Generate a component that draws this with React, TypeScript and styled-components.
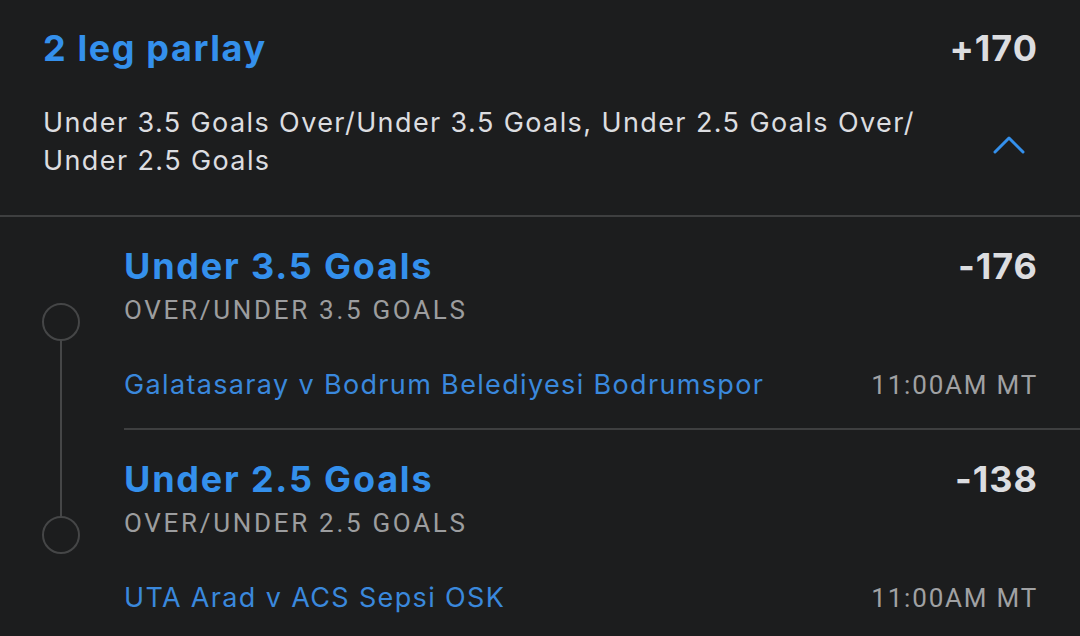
import styled, { createGlobalStyle } from "styled-components";

const GlobalStyle = createGlobalStyle`
    html, body {
        margin: 0;
        padding: 0;
        background: #1c1d1e;
    }
    body {
        font-family: Inter, "Open Sans", sans-serif;
        color: #dcdde0;
    }
`;

const BLUE = "#3490ec";
const LINK = "#3a88dc";
const RAIL = "#454647";

const Card = styled.div`
    width: 1080px;
    height: 636px;
    overflow: hidden;
    background: #1c1d1e;
`;

const Header = styled.div`
    padding: 24px 42px 0 43px;
    border-bottom: 2px solid #3e3f40;
    height: 191px;
    box-sizing: content-box;
`;

const TitleRow = styled.div`
    display: flex;
    justify-content: space-between;
    align-items: baseline;
`;

const ParlayTitle = styled.h1`
    margin: 0;
    font-size: 36px;
    font-weight: 700;
    color: ${BLUE};
    line-height: 48px;
    letter-spacing: 1.6px;
`;

const Odds = styled.span<{ size?: number }>`
    font-size: ${props => props.size ?? 36}px;
    font-weight: 700;
    color: #dcdde0;
    letter-spacing: 1px;
`;

const Summary = styled.div`
    display: flex;
    align-items: center;
    margin-top: 32px;
`;

const SummaryText = styled.p`
    flex: 1;
    margin: 0;
    font-size: 27px;
    line-height: 38px;
    letter-spacing: 1.4px;
    color: #dcdde0;
    padding-right: 20px;
`;

const Toggle = styled.button`
    background: none;
    border: 0;
    padding: 4px 13px 0 0;
    display: flex;
    cursor: pointer;
`;

const LegRow = styled.div`
    display: grid;
    grid-template-columns: 124px 1fr;
`;

const Rail = styled.div`
    display: flex;
    flex-direction: column;
    align-items: center;
    padding-right: 2px;
`;

const RailLine = styled.div<{ visible: boolean; grow?: boolean }>`
    width: 2px;
    background: ${props => (props.visible ? RAIL : "transparent")};
    height: ${props => (props.grow ? "auto" : "86px")};
    flex: ${props => (props.grow ? 1 : "none")};
`;

const Dot = styled.div`
    width: 34px;
    height: 34px;
    border: 2px solid ${RAIL};
    border-radius: 50%;
    flex: none;
`;

const LegBody = styled.div<{ divided: boolean }>`
    padding: 26px 42px 0 0;
    height: 185px;
    box-sizing: content-box;
    border-bottom: ${props => (props.divided ? `2px solid #3e3f40` : "none")};
`;

const LegTitle = styled.div`
    font-size: 36px;
    font-weight: 700;
    color: ${BLUE};
    line-height: 46px;
    letter-spacing: 1.8px;
`;

const Market = styled.div`
    font-family: Roboto, "Liberation Sans", sans-serif;
    font-size: 26px;
    letter-spacing: 2.7px;
    color: #9c9d9f;
    line-height: 30px;
    margin-top: 6px;
`;

const EventRow = styled.div`
    display: flex;
    justify-content: space-between;
    align-items: baseline;
    margin-top: 43px;
`;

const EventName = styled.a`
    font-size: 27px;
    color: ${LINK};
    text-decoration: none;
    letter-spacing: 1.35px;
`;

const StartTime = styled.span`
    font-family: Roboto, "Liberation Sans", sans-serif;
    font-size: 26px;
    letter-spacing: 1.8px;
    color: #a0a1a3;
`;

type Leg = {
    pick: string;
    odds: string;
    market: string;
    event: string;
    time: string;
};

const legs: Leg[] = [
    {
        pick: "Under 3.5 Goals",
        odds: "-176",
        market: "OVER/UNDER 3.5 GOALS",
        event: "Galatasaray v Bodrum Belediyesi Bodrumspor",
        time: "11:00AM MT",
    },
    {
        pick: "Under 2.5 Goals",
        odds: "-138",
        market: "OVER/UNDER 2.5 GOALS",
        event: "UTA Arad v ACS Sepsi OSK",
        time: "11:00AM MT",
    },
];

function ChevronUp() {
    return (
        <svg width="32" height="19" viewBox="0 0 32 19" fill="none">
            <polyline points="2,17 16,3 30,17" stroke={BLUE} strokeWidth="3" strokeLinecap="round" strokeLinejoin="round" />
        </svg>
    );
}

export default function App() {
    return (
        <Card>
            <GlobalStyle />
            <Header>
                <TitleRow>
                    <ParlayTitle>2 leg parlay</ParlayTitle>
                    <Odds>+170</Odds>
                </TitleRow>
                <Summary>
                    <SummaryText>
                        {legs.map((leg, i) => (
                            <span key={leg.pick}>
                                {leg.pick} Over/<wbr />Under {leg.pick.split(" ")[1]} Goals
                                {i < legs.length - 1 ? ", " : ""}
                            </span>
                        ))}
                    </SummaryText>
                    <Toggle aria-label="Collapse legs">
                        <ChevronUp />
                    </Toggle>
                </Summary>
            </Header>

            {legs.map((leg, i) => {
                const first = i === 0;
                const last = i === legs.length - 1;
                return (
                    <LegRow key={leg.pick}>
                        <Rail>
                            <RailLine visible={!first} />
                            <Dot />
                            <RailLine visible={!last} grow />
                        </Rail>
                        <LegBody divided={!last}>
                            <TitleRow>
                                <LegTitle>{leg.pick}</LegTitle>
                                <Odds size={36}>{leg.odds}</Odds>
                            </TitleRow>
                            <Market>{leg.market}</Market>
                            <EventRow>
                                <EventName href="#">{leg.event}</EventName>
                                <StartTime>{leg.time}</StartTime>
                            </EventRow>
                        </LegBody>
                    </LegRow>
                );
            })}
        </Card>
    );
}
